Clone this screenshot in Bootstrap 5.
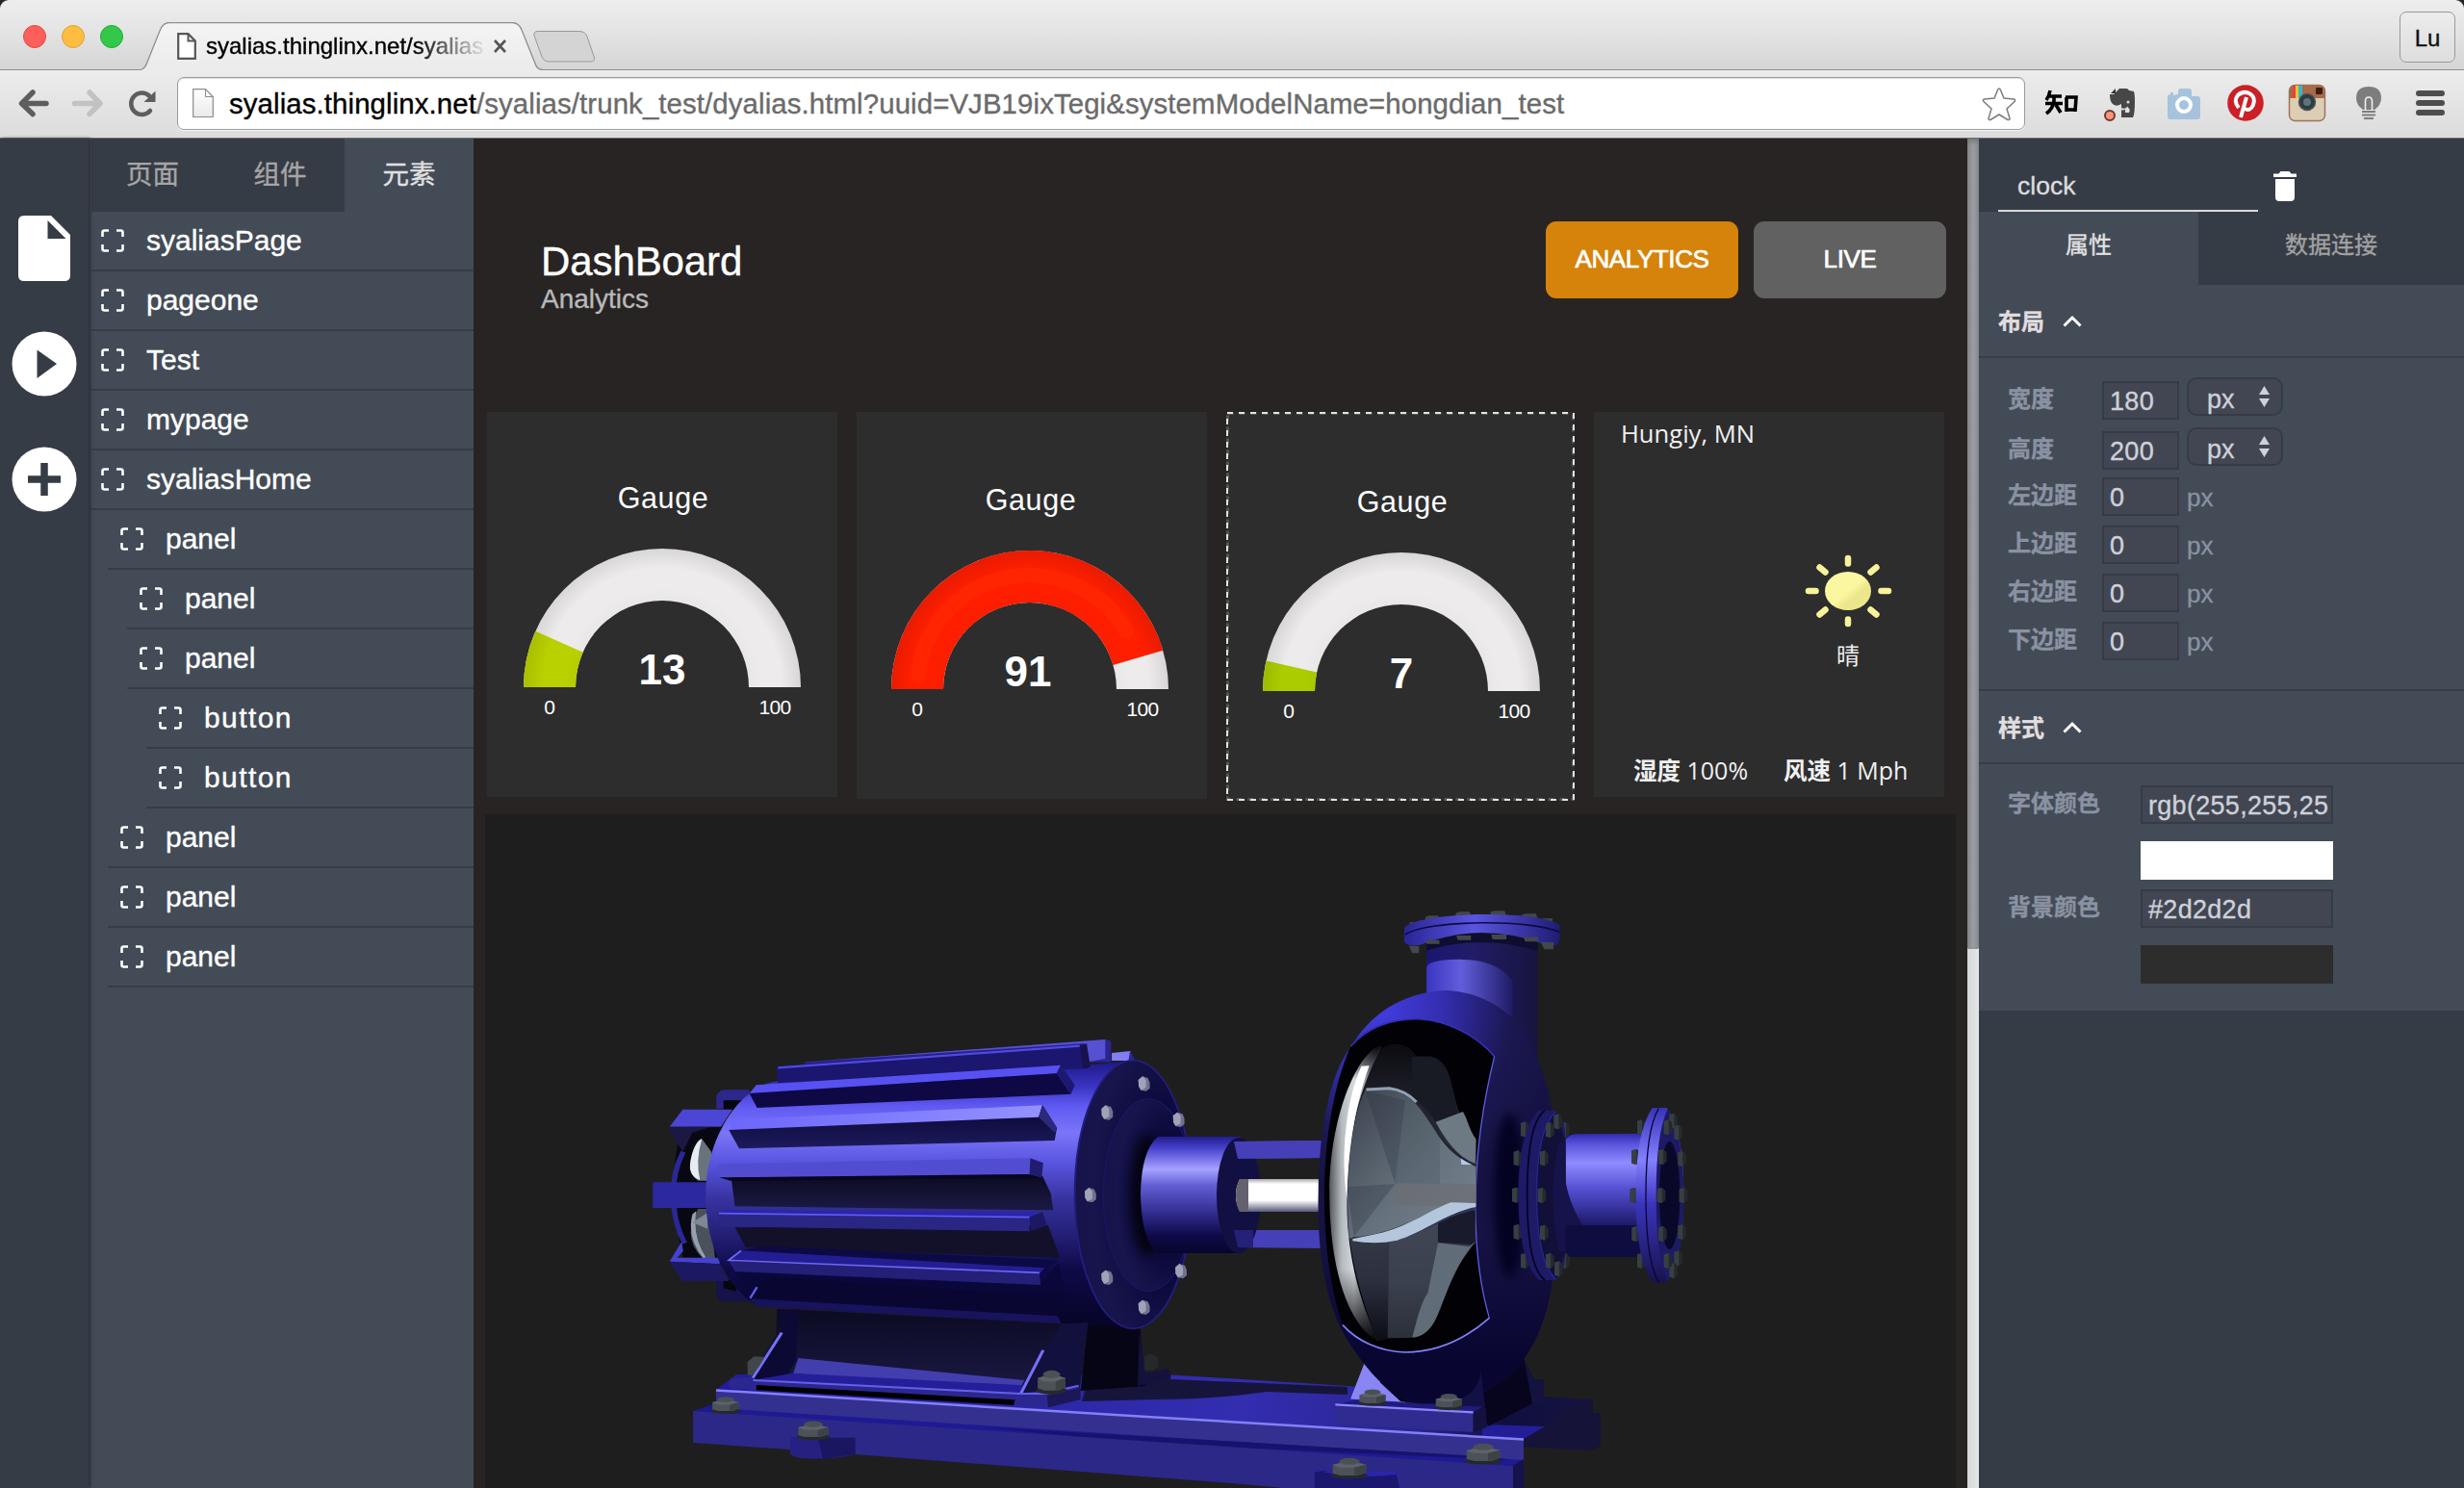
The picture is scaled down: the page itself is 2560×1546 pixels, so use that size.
<!DOCTYPE html>
<html lang="zh-CN">
<head>
<meta charset="utf-8">
<title>syalias.thinglinx.net</title>
<link href="https://cdn.jsdelivr.net/npm/bootstrap@5.3.0/dist/css/bootstrap.min.css" rel="stylesheet">
<style>
:root{--deep:#363c46;--slate:#434b57;--line:#353d46}
body{width:2560px;height:1546px;overflow:hidden;background:#282424;color:#fff;font-family:"Liberation Sans","Noto Sans CJK SC",sans-serif;line-height:1;-webkit-text-stroke:.35px}
svg{display:block;flex:none}
.tabstrip{height:73px;background:linear-gradient(#ededed,#e4e4e4 45%,#d5d5d5);border-bottom:1px solid #8f8f8f;border-radius:9px 9px 0 0}
.lights{gap:16px;padding:26px 0 0 24px;width:147px}
.lights i{width:24px;height:24px;border-radius:50%;border:1px solid}
.tabshape{width:416px;height:50px;margin-top:23px;position:relative}
.tabshape>svg{position:absolute;left:0;top:0}
.tabbody{position:relative;height:50px;padding-left:37px}
.tabtitle{width:290px;margin-left:10px;font-size:24px;color:#000;line-height:34px;-webkit-mask-image:linear-gradient(90deg,#000 75%,transparent 101%)}
.user-btn{width:58px;height:53px;margin:12px 9px 0 auto;border:1px solid #999;border-radius:7px;font-size:24px;color:#111;background:linear-gradient(#ececec,#dedede);padding-top:3px}
.toolbar{height:71px;background:linear-gradient(#ececec,#dcdcdc);border-bottom:1px solid #6e6e6e;padding:7px 20px 0 19px}
.urlbox{width:1920px;height:55px;margin-left:22px;background:#fff;border:1px solid #9b9b9b;border-radius:7px;padding:0 8px 0 15px;box-shadow:inset 0 1px 1px #ddd,0 1px 0 #f6f6f6}
.urltext{font-size:29.4px;letter-spacing:.1px;color:#6b6b6b;margin-left:16px;padding-top:1px}
.workspace{height:1402px}
.rail{width:92px;background:var(--deep);padding-top:80px;box-shadow:2px 0 3px #2a2e35;z-index:1}
.rail svg{margin:0 auto 52px}
.sidebar{width:400px;background:var(--slate);padding-left:3px}
.side-tabs{height:76px}
.side-tabs div{width:134px;background:var(--deep);color:#a6a6a6;font-size:27.5px;padding-bottom:0}
.side-tabs div:first-child{width:129px;padding-right:2px}
.side-tabs .on{background:var(--slate);color:#e0e0e0}
.node{height:62px;border-bottom:2px solid var(--line);padding-left:13px;font-size:30px;color:#fff;margin-left:calc(var(--d)*20px - 3px)}
.node.root{margin-left:0;padding-left:10px}
.node.wider{letter-spacing:1.4px}
.node svg{margin-right:23px}
.stage{width:1552px;background:#282424;padding:0 12px}
.stage-head{height:284px;padding:86px 10px 0 58px}
.stage-head h1{font-size:42px;line-height:42px;margin:21px 0 0;font-weight:400;letter-spacing:-.1px}
.stage-head p{font-size:28px;line-height:28px;color:#b9b9b9;margin:4px 0 0}
.pill{width:200px;height:80px;border-radius:11px;font-size:26px;letter-spacing:-.4px;padding-bottom:2px;-webkit-text-stroke:.7px #fff}
.cards{height:418px;padding:0 12px 0 2px;gap:20px}
.tile{width:364px;height:400px;background:#2d2d2d}
.tile.tall{height:402px}
.tile.chosen{width:362px;height:404px}
.weather{font-family:"Open Sans","Noto Sans CJK SC",sans-serif;color:#f0f0f0;font-size:25px}
.scene{width:1528px;height:700px;background:#1e1e1e}
.scroll{width:12px;background:linear-gradient(90deg,#d5d7d8,#e4e6e7)}
.scroll i{display:block;height:842px;background:linear-gradient(90deg,#8c8e92,#999ca2 50%,#909398);border-radius:0 0 2px 2px;box-shadow:inset 0 3px 5px #777}
.props{width:504px;background:var(--deep)}
.props-head{height:76px;padding:0 0 0 20px}
.name-field{width:270px;height:76px;border-bottom:2px solid #dadada;font-size:26.500px;color:#ddd;padding:32px 0 0 20px;line-height:34px}
.props-tabs{height:76px;font-size:24px}
.props-tabs div{padding-bottom:6px}
.sec{background:var(--slate)}
.sec-title{height:76px;border-bottom:2px solid var(--line);padding-left:20px;gap:19px;font-size:24px;font-weight:700;color:#e0dede}
.sec-title span{padding-top:3px}
.frow{padding-left:30px;height:40px;margin-bottom:10px}
.flabel{width:98px;font-size:24px;font-weight:700;color:#8a92a1;padding-bottom:2px}
.wide .flabel{width:138px}
.inbox{width:80px;height:40px;border:2px solid var(--deep);background:#424653;color:#cdd1d8;font-size:27px;padding:2px 0 0 6px;overflow:hidden;white-space:nowrap;letter-spacing:.3px}
.wide .inbox,.swatch{width:200px}
.swatch{height:40px;margin-left:168px}
.picker{width:100px;height:40px;border:2px solid var(--deep);border-radius:10px;background:#424653;color:#cdd1d8;font-size:27px;margin:-8px 0 0 8px;padding:8px 12px 0 19px}
.picker svg{margin-top:-1px}
.unit{font-size:26px;color:#8a92a1;margin-left:8px;padding-top:2px}
</style>
<script src="https://cdn.jsdelivr.net/npm/bootstrap@5.3.0/dist/js/bootstrap.bundle.min.js"></script>
</head>
<body>
<svg width="0" height="0" class="position-absolute">
 <defs>
  <symbol id="frame" viewBox="0 0 24 24"><path d="M1.500 8V3.500q0-2 2-2H8M16 1.500h4.500q2 0 2 2V8M22.500 16v4.500q0 2-2 2H16M8 22.500H3.500q-2 0-2-2V16" fill="none" stroke="#fff" stroke-width="2.600"/></symbol>
  <symbol id="caret" viewBox="0 0 20 13"><path d="M1.500 11.500L10 3l8.500 8.500" fill="none" stroke="#fff" stroke-width="3"/></symbol>
  <symbol id="updown" viewBox="0 0 11 22"><path d="M0 9L5.500 0 11 9zM0 13h11L5.500 22z" fill="#cdd1d8"/></symbol>
  <radialGradient id="ring" gradientUnits="userSpaceOnUse" cx="182" cy="286" r="144"><stop offset=".62" stop-color="#000" stop-opacity=".02"/><stop offset=".72" stop-color="#000" stop-opacity="0"/><stop offset=".86" stop-color="#000" stop-opacity="0"/><stop offset="1" stop-color="#000" stop-opacity=".09"/></radialGradient>
 </defs>
</svg>

<header>
 <div class="tabstrip d-flex">
  <div class="lights d-flex"><i style="background:#fd605b;border-color:#e2463f"></i><i style="background:#fdbd40;border-color:#dfa034"></i><i style="background:#34c84a;border-color:#1fa935"></i></div>
  <div class="tabshape">
   <svg width="480" height="50"><defs><linearGradient id="tg" x2="0" y2="1"><stop stop-color="#f4f4f4"/><stop offset="1" stop-color="#ebebeb"/></linearGradient></defs><path d="M-2 50.500V49.500Q3 49 5 44L19 9Q22 .500 29 .500H385Q392 .500 395 8L409 43Q411 49.500 417 49.500V50.500z" fill="url(#tg)"/><path d="M-2 49.500Q3 49 5 44L19 9Q22 .500 29 .500H385Q392 .500 395 8L409 43Q411 49.500 417 49.500" fill="none" stroke="#8f8f8f" stroke-width="1.300"/>
    <path d="M412 9.500H455Q461 9.500 463 15L470.500 37Q471 41 466 41H424Q418 41 416 36L408 14Q407 9.500 412 9.500z" fill="#d4d4d4" stroke="#999"/></svg>
   <div class="tabbody d-flex align-items-center">
    <svg width="20" height="28"><path d="M1.200 1.200H11.500L18.800 8.500V26.800H1.200z" fill="#fff" stroke="#565656" stroke-width="2.200"/><path d="M11.500 1V8.500H19" fill="none" stroke="#565656" stroke-width="2"/></svg>
    <div class="tabtitle overflow-hidden text-nowrap">syalias.thinglinx.net/syalias</div>
    <svg width="16" height="16" style="margin-left:7px"><path d="M3 2l11 12M14 2L3 14" stroke="#555" stroke-width="2.600"/></svg>
   </div>
  </div>
  <div class="user-btn d-flex justify-content-center align-items-center">Lu</div>
 </div>
 <div class="toolbar d-flex">
  <svg width="143" height="55" fill="none" stroke-linecap="round" stroke-linejoin="round">
   <path d="M15 16L3.500 27.500 15 38.500M5 27.500H29" stroke="#5e5e5e" stroke-width="5.500"/>
   <path d="M74 16L85 27.500 74 38.500M58.500 27.500H84" stroke="#c2c2c2" stroke-width="5.500"/>
   <path d="M137 35A11.200 11.200 0 1 1 136 19.500" stroke="#5e5e5e" stroke-width="4.500"/><path d="M142.500 14.500V26H130.500z" fill="#5e5e5e"/>
  </svg>
  <div class="urlbox d-flex align-items-center">
   <svg width="22" height="31"><defs><linearGradient id="pg" x2="0" y2="1"><stop stop-color="#fff"/><stop offset="1" stop-color="#eaeaea"/></linearGradient></defs><path d="M.700 .700H13.500L21.300 8.500V29.500H.700z" fill="url(#pg)" stroke="#8b8b8b" stroke-width="1.200"/><path d="M13.500 .700V8.500H21.300" fill="none" stroke="#8b8b8b"/></svg>
   <div class="urltext text-nowrap"><span class="text-black">syalias.thinglinx.net</span>/syalias/trunk_test/dyalias.html?uuid=VJB19ixTegi&amp;systemModelName=hongdian_test</div>
   <svg width="36" height="36" viewBox="0 0 36 36" class="ms-auto"><path d="M18 2q1 0 1.500 1.500L23 12l10.500 1q2 .800 .500 2.500L26 23l3 10q0 2-2 1.500L18 29l-9 5.500q-2 .500-2-1.500l3-10-8-7.500Q.500 13.800 2.500 13L13 12l3.500-8.500Q17 2 18 2z" fill="#fff" stroke="#7c7c7c" stroke-width="1.500"/></svg>
  </div>
  <svg width="436" height="56" viewBox="2104 80 436 56">
   <g fill="none" stroke="#000" stroke-width="3.600"><path d="M2130 94q-1 6-4 10M2129 100h13M2125 107.500h18M2134 100v5q-1 8-8 13M2136 109l5 8M2146 101h11l-1 15M2147 101v15M2146 114h10"/></g>
   <path d="M2196 98l6-6h7q2 0 3 2l5 1q1 3 1 10 0 14-2 17h-12v-8h4v3h4q2-4-2-6-2 3-6 1v-4q-6 4-10-1-2-3-2-9z" fill="#474747"/><path d="M2193 97l5-5v5z" fill="#333"/><circle cx="2211" cy="106" r="1.500" fill="#ddd"/><path d="M2203 113q3 3 8-2" stroke="#ccc" fill="none"/>
   <circle cx="2192" cy="120" r="5" fill="#ff9376" stroke="#6d3834" stroke-width="2"/>
   <path d="M2254 98q-2 0-2 3v20q0 3 3 3h28q3 0 3-3v-18q0-3-3-3h-6v-5q0-3-3-3h-8q-3 0-3 3v3l-5 1v-3h-3v3z" fill="#a6c3de"/><circle cx="2269" cy="109" r="7" fill="#a6c3de" stroke="#fff" stroke-width="4"/>
   <circle cx="2333" cy="107" r="18.800" fill="#cb2027"/><path d="M2326 112q-6-7-1-13 5-5 12-2 7 4 4 12-3 7-9 4M2334 101l-6 21" fill="none" stroke="#fff" stroke-width="4"/>
   <rect x="2378.500" y="88.500" width="37" height="37" rx="6" fill="#dccdb5" stroke="#9c7457" stroke-width="1.500"/><path d="M2379 102V94q0-5 5-5h26q5 0 5 5v8z" fill="#a9694a"/><path d="M2382 89h3v13h-3z" fill="#e8423a"/><path d="M2385 89h3v13h-3z" fill="#f5c23a"/><path d="M2388 89h4v13h-4z" fill="#38b7c9"/><rect x="2406" y="91" width="7" height="7" rx="1" fill="#3c1d14"/><circle cx="2397" cy="106" r="8.500" fill="#2d3c42" stroke="#555" stroke-width="1.500"/><circle cx="2397" cy="106" r="4" fill="#5f7478"/>
   <path d="M2455 114q-7-5-7-12 0-12 13-12t13 12q0 7-7 12z" fill="#7d7d7d"/><path d="M2457.500 115v-10q0-4 3.500-4t3.500 4v10" fill="none" stroke="#f0f0f0" stroke-width="1.600"/><path d="M2454 116h14M2454 119.500h14M2456 123h10" stroke="#7d7d7d" stroke-width="2"/>
   <path d="M2513 97h24M2513 107h24M2513 117h24" stroke="#4d4d4d" stroke-width="6" stroke-linecap="round"/>
  </svg>
 </div>
</header>

<main class="workspace d-flex">
 <nav class="rail position-relative">
  <svg width="54" height="68"><path d="M6 0H34L54 20V62q0 6-6 6H6q-6 0-6-6V6Q0 0 6 0z" fill="#fff"/><path d="M30.500 5V24H49.500z" fill="#363c46"/></svg>
  <svg width="68" height="68"><circle cx="34" cy="34" r="33.500" fill="#fff"/><path d="M26.500 19.500V49L47 34z" fill="#363c46"/></svg>
  <svg width="68" height="68"><circle cx="34" cy="34" r="33.500" fill="#fff"/><path d="M34 17V51M17 34H51" stroke="#363c46" stroke-width="7.500"/></svg>
 </nav>
 <aside class="sidebar">
  <div class="side-tabs d-flex" style="width:397px"><div class="d-flex align-items-center justify-content-center">页面</div><div class="d-flex align-items-center justify-content-center">组件</div><div class="on d-flex align-items-center justify-content-center">元素</div></div>
  <div class="node root d-flex align-items-center"><svg width="24" height="24"><use href="#frame"/></svg>syaliasPage</div>
  <div class="node root d-flex align-items-center"><svg width="24" height="24"><use href="#frame"/></svg>pageone</div>
  <div class="node root d-flex align-items-center"><svg width="24" height="24"><use href="#frame"/></svg>Test</div>
  <div class="node root d-flex align-items-center"><svg width="24" height="24"><use href="#frame"/></svg>mypage</div>
  <div class="node root d-flex align-items-center"><svg width="24" height="24"><use href="#frame"/></svg>syaliasHome</div>
  <div class="node d-flex align-items-center" style="--d:1"><svg width="24" height="24"><use href="#frame"/></svg>panel</div>
  <div class="node d-flex align-items-center" style="--d:2"><svg width="24" height="24"><use href="#frame"/></svg>panel</div>
  <div class="node d-flex align-items-center" style="--d:2"><svg width="24" height="24"><use href="#frame"/></svg>panel</div>
  <div class="node wider d-flex align-items-center" style="--d:3"><svg width="24" height="24"><use href="#frame"/></svg>button</div>
  <div class="node wider d-flex align-items-center" style="--d:3"><svg width="24" height="24"><use href="#frame"/></svg>button</div>
  <div class="node d-flex align-items-center" style="--d:1"><svg width="24" height="24"><use href="#frame"/></svg>panel</div>
  <div class="node d-flex align-items-center" style="--d:1"><svg width="24" height="24"><use href="#frame"/></svg>panel</div>
  <div class="node d-flex align-items-center" style="--d:1"><svg width="24" height="24"><use href="#frame"/></svg>panel</div>
 </aside>

 <section class="stage">
  <div class="stage-head d-flex justify-content-between">
   <div><h1>DashBoard</h1><p>Analytics</p></div>
   <div class="d-flex" style="gap:16px">
    <div class="pill d-flex align-items-center justify-content-center" style="background:#d5830a">ANALYTICS</div>
    <div class="pill d-flex align-items-center justify-content-center" style="background:#616161">LIVE</div>
   </div>
  </div>
  <div class="cards d-flex">
   <div class="tile"><svg width="364" height="400" fill="#fff" text-anchor="middle">
    <path d="M38 286A144 144 0 0 1 326 286H272A90 90 0 0 0 92 286z" fill="#edebeb"/>
    <path d="M38 286A144 144 0 0 1 50.300 227.800L99.700 249.800A90 90 0 0 0 92 286z" fill="#b9d100"/>
    <path d="M38 286A144 144 0 0 1 326 286H272A90 90 0 0 0 92 286z" fill="url(#ring)"/>
    <text x="183" y="100" font-size="30.500" letter-spacing=".6">Gauge</text><text x="182" y="283" font-size="44" font-weight="700">13</text>
    <text x="65" y="314" font-size="21">0</text><text x="299" y="314" font-size="21" letter-spacing="-.6">100</text></svg></div>
   <div class="tile tall"><svg width="364" height="402" fill="#fff" text-anchor="middle"><g transform="translate(-2 2)">
    <path d="M38 286A144 144 0 0 1 326 286H272A90 90 0 0 0 92 286z" fill="#edebeb"/>
    <path d="M38 286A144 144 0 0 1 320.300 245.800L268.400 260.900A90 90 0 0 0 92 286z" fill="#ff1e00"/>
    <path d="M66 272A116 116 0 0 1 282 226" fill="none" stroke="#ff2803" stroke-width="16" stroke-linecap="round" opacity=".7"/>
    <path d="M38 286A144 144 0 0 1 326 286H272A90 90 0 0 0 92 286z" fill="url(#ring)"/>
    <text x="183" y="100" font-size="30.500" letter-spacing=".6">Gauge</text><text x="180" y="283" font-size="44" font-weight="700">91</text>
    <text x="65" y="314" font-size="21">0</text><text x="299" y="314" font-size="21" letter-spacing="-.6">100</text></g></svg></div>
   <div class="tile chosen"><svg width="362" height="404" fill="#fff" text-anchor="middle"><rect x="1.500" y="1.500" width="359" height="401" fill="none" stroke="#555" stroke-width="3" stroke-dasharray="6 6"/><rect x="1" y="1" width="360" height="402" fill="none" stroke="#e2e2e2" stroke-width="2" stroke-dasharray="6 6"/><g transform="translate(0 4)">
    <path d="M38 286A144 144 0 0 1 326 286H272A90 90 0 0 0 92 286z" fill="#edebeb"/>
    <path d="M38 286A144 144 0 0 1 41.500 254.600L94.200 266.400A90 90 0 0 0 92 286z" fill="#abcd00"/>
    <path d="M38 286A144 144 0 0 1 326 286H272A90 90 0 0 0 92 286z" fill="url(#ring)"/>
    <text x="183" y="100" font-size="30.500" letter-spacing=".6">Gauge</text><text x="182" y="283" font-size="44" font-weight="700">7</text>
    <text x="65" y="314" font-size="21">0</text><text x="299" y="314" font-size="21" letter-spacing="-.6">100</text></g></svg></div>
   <div class="tile weather"><svg width="364" height="400" fill="#f0f0f0">
    <defs><linearGradient id="sun" x2="1" y2="1"><stop offset=".5" stop-color="#fbf7a0"/><stop offset=".65" stop-color="#ece78c"/></linearGradient></defs>
    <text x="28" y="32" font-size="25.600">Hungiy, MN</text>
    <g stroke="#f6f39a" stroke-width="6.500" stroke-linecap="round"><path d="M223 186h7.500M298.500 186H306M264 152v5.500M264 215.500v4.500M234.500 161.500l6 5M293.500 161.500l-6 5M234.500 210.500l6-5M293.500 210.500l-6-5"/></g>
    <ellipse cx="264" cy="186" rx="24" ry="20" fill="url(#sun)"/>
    <text x="252" y="262" font-size="24">晴</text>
    <text x="41" y="382" font-size="25"><tspan font-weight="700" font-size="24.500">湿度</tspan> 100%</text>
    <text x="197" y="382" font-size="25"><tspan font-weight="700" font-size="24.500">风速</tspan> 1 Mph</text></svg></div>
  </div>
  <div class="scene">
  <svg width="1528" height="700" viewBox="504 846 1528 700">
   <defs>
    <linearGradient id="body" x2="0" y2="1"><stop stop-color="#1c1784"/><stop offset=".1" stop-color="#3b35c4"/><stop offset=".17" stop-color="#5f59f2"/><stop offset=".27" stop-color="#7a75f8"/><stop offset=".38" stop-color="#5a55e0"/><stop offset=".52" stop-color="#37329e"/><stop offset=".66" stop-color="#221e72"/><stop offset=".78" stop-color="#0e0a48"/><stop offset="1" stop-color="#060424"/></linearGradient>
    <linearGradient id="cyl" x2="0" y2="1"><stop stop-color="#221c90"/><stop offset=".1" stop-color="#4742cc"/><stop offset=".28" stop-color="#a6a2ff"/><stop offset=".42" stop-color="#625dd4"/><stop offset=".65" stop-color="#322d90"/><stop offset=".85" stop-color="#0e0a48"/><stop offset="1" stop-color="#07052c"/></linearGradient>
    <linearGradient id="pipeR" x2="0" y2="1"><stop stop-color="#2e29ae"/><stop offset=".12" stop-color="#5a55dc"/><stop offset=".32" stop-color="#8f8bff"/><stop offset=".6" stop-color="#5550d4"/><stop offset="1" stop-color="#1c1868"/></linearGradient>
    <linearGradient id="f3" x2="1"><stop stop-color="#6c67fa"/><stop offset="1" stop-color="#9491ff"/></linearGradient>
    <linearGradient id="dk" x2="0" y2="1"><stop stop-color="#0a0634"/><stop offset="1" stop-color="#1d1b5c"/></linearGradient>
    <linearGradient id="dk2" x2="0" y2="1"><stop stop-color="#0c0b22"/><stop offset="1" stop-color="#1b1945"/></linearGradient>
    <radialGradient id="face" cx=".75" cy=".5" r=".75"><stop stop-color="#02010c"/><stop offset=".4" stop-color="#0b093a"/><stop offset=".8" stop-color="#17154c"/><stop offset="1" stop-color="#15134a"/></radialGradient>
    <radialGradient id="vol" gradientUnits="userSpaceOnUse" cx="220" cy="150" r="560"><stop stop-color="#423ce0"/><stop offset=".35" stop-color="#342eb0"/><stop offset=".72" stop-color="#1b1852"/><stop offset="1" stop-color="#161344"/></radialGradient>
    <linearGradient id="volb" x2="0" y2="1"><stop offset=".6" stop-color="#080530" stop-opacity="0"/><stop offset=".9" stop-color="#080530"/></linearGradient>
    <linearGradient id="neck" x2="1"><stop stop-color="#1a1670"/><stop offset=".4" stop-color="#211d68"/><stop offset="1" stop-color="#17143e"/></linearGradient>
    <linearGradient id="neckhi" x2="1"><stop stop-color="#3a35c0"/><stop offset=".4" stop-color="#625ddc"/><stop offset="1" stop-color="#1f1b64"/></linearGradient>
    <linearGradient id="fl" x2="1"><stop stop-color="#2a2594"/><stop offset=".45" stop-color="#5a55e0"/><stop offset="1" stop-color="#201c74"/></linearGradient>
    <linearGradient id="disc" gradientUnits="userSpaceOnUse" x1="64" y1="0" x2="215" y2="0"><stop stop-color="#56595f"/><stop offset=".25" stop-color="#b5babf"/><stop offset=".5" stop-color="#d5d9dc"/><stop offset="1" stop-color="#60646c"/></linearGradient>
    <linearGradient id="discfade" x2="0" y2="1"><stop stop-color="#020206"/><stop offset=".12" stop-color="#020206" stop-opacity="0"/><stop offset=".75" stop-color="#020206" stop-opacity="0"/><stop offset="1" stop-color="#020206"/></linearGradient>
    <linearGradient id="imp" x1="0" y1="0" x2="1" y2="1"><stop stop-color="#3a414d"/><stop offset=".55" stop-color="#65717c"/><stop offset="1" stop-color="#77848e"/></linearGradient>
    <linearGradient id="impb" x2="0" y2="1"><stop stop-color="#0c0c12"/><stop offset=".5" stop-color="#3c424e"/><stop offset=".8" stop-color="#2b2f3e"/><stop offset="1" stop-color="#0c0c14"/></linearGradient>
    <linearGradient id="shaft" x2="0" y2="1"><stop stop-color="#aaa"/><stop offset=".15" stop-color="#fff"/><stop offset=".65" stop-color="#fff"/><stop offset="1" stop-color="#555878"/></linearGradient>
    <linearGradient id="flr" x2="0" y2="1"><stop stop-color="#3833b8"/><stop offset=".3" stop-color="#8480ff"/><stop offset=".55" stop-color="#3a35bc"/><stop offset="1" stop-color="#17134c"/></linearGradient>
    <linearGradient id="basetop" x2="1"><stop stop-color="#221c9c"/><stop offset=".6" stop-color="#332db0"/><stop offset=".8" stop-color="#2a2492"/><stop offset=".9" stop-color="#100e40"/><stop offset="1" stop-color="#16143e"/></linearGradient>
    <filter id="soft" x="-30%" y="-30%" width="160%" height="160%"><feGaussianBlur stdDeviation="14"/></filter>
    <g id="nut"><ellipse cx="0" cy="0" rx="19" ry="3.500" fill="#25292c"/><path d="M-17-11L-8-13H8L17-11V-3L8 0H-9L-17-2z" fill="#4c5257"/><path d="M-17-11L-8-13H8L17-11 5-8H-10z" fill="#5d6368"/><path d="M5-8L17-11V-3L5 0z" fill="#3d4247"/><path d="M-11-14Q-9-18 0-18T11-14Q8-11 0-11T-11-14z" fill="#4a5055"/></g>
    <g id="screw"><path d="M-15-12L-4-23 10-18 15-4V14L5 23-8 20-14 8z" fill="#6f7290"/><path d="M-15-12L-4-23 5-12V12L-8 20-14 8z" fill="#a0a2b8"/></g>
    <g id="stud"><path d="M-12-20L4-24 14-14V14L4 24-12 20z" fill="#24292c"/><path d="M-12-20L3-24V24L-12 20z" fill="#383f42"/></g>
   </defs>

   <!-- base frame -->
   <g>
    <path d="M1655 1454V1468H1663V1502L1654 1507L1583 1503V1490z" fill="#151338"/>
    <path d="M744 1444L765 1428H1210L1400 1440L1655 1454L1583 1495z" fill="url(#basetop)"/>
    <path d="M1130 1433H1217L1400 1441V1449L1316 1446Q1260 1454 1200 1454L1124 1456z" fill="#16143a"/>
    <path d="M1540 1480L1605 1482L1583 1495L1540 1492z" fill="#231d98"/>
    <path d="M720 1466L744 1458L1583 1512V1517L1572 1523L1200 1500z" fill="#1f1993"/>
    <path d="M744 1444L1583 1495V1517L744 1463z" fill="#343090"/>
    <path d="M1020 1483L1200 1493L1540 1513L1572 1517L1200 1500z" fill="#17136c"/>
    <path d="M720 1466L1200 1498L1572 1523V1546H1333L1280 1541L888 1511L821 1506L720 1499z" fill="#2c2888"/>
    <path d="M1572 1523L1583 1516V1546H1572z" fill="#16124c"/>
    <path d="M744 1444.500L1200 1472.500L1583 1495.500" stroke="#8480f8" stroke-width="2.500" fill="none"/>
    <path d="M821 1493H888.500V1511Q870 1516 840 1515.500Q826 1515 821 1511z" fill="#262180"/><path d="M850 1494H888.500V1511L855 1515.500z" fill="#1a1660"/>
    <path d="M1366 1527L1400 1532 1451 1532 1454 1546H1366z" fill="#1b166e"/><path d="M1366 1527Q1405 1538 1451 1532V1529H1366z" fill="#2b25ac"/>
    <use href="#nut" transform="translate(754 1466) scale(.82)"/><use href="#nut" transform="translate(845 1493) scale(.92)"/><use href="#nut" transform="translate(1402 1533) scale(1.020)"/><use href="#nut" transform="translate(1541 1518) scale(1.020)"/>
   </g>

   <!-- motor -->
   <g transform="translate(660 1040) scale(.3954 .33333)">
    <path d="M1190 1000H1325L1340 1200L1170 1215z" fill="#060515"/><path d="M1325 1030L1340 1160L1400 1145Q1412 1160 1405 1180L1320 1200z" fill="#14123c"/>
    <path d="M1338 1150V1108L1350 1098 1374 1110V1140L1360 1152z" fill="#25292c"/>
    <path d="M213 335V300Q215 280 235 277H300V310H235V335z" fill="#2c278c"/><path d="M213 872V915Q215 935 235 935H310L260 860z" fill="#15124c"/><path d="M232 310H280V340H232zM232 870H265V905L232 895z" fill="#07060f"/>
    <path d="M120 390H230V820H130Q80 600 120 390z" fill="#080812"/>
    <path d="M145 500C150 460 165 430 175 430L200 470V560H165Q140 540 145 500z" fill="#6a737c"/><path d="M145 500Q155 440 175 430Q158 500 170 558Q138 545 145 500z" fill="#e6ecf2"/>
    <path d="M165 648H195L210 805H180Q120 740 165 648z" fill="#4a515c"/><path d="M150 665Q135 740 180 803L185 798Q150 735 160 655z" fill="#94a2b0"/><path d="M150 690L190 660V710z" fill="#7d8892"/>
    <path d="M126 470Q100 530 100 600Q100 690 130 755" fill="none" stroke="#2b2796" stroke-width="14"/>
    <path d="M125 338H255L225 392H90z" fill="#4b46d4"/><path d="M90 392H225L190 395 150 410 125 470L90 405z" fill="#1b1844"/>
    <path d="M46 565H190V645H46z" fill="#2c289e"/>
    <path d="M122 750L126 780 110 800H222V820L90 812z" fill="#4742cc"/><path d="M90 812L222 820L245 873H125z" fill="#1c1962"/>
    <path d="M375 250C280 260 185 420 185 605C185 780 250 900 320 950L1120 1005L1320 1021V185L1180 200z" fill="url(#body)"/>
    <path d="M447 190L1235 120L1250 124V190L440 212z" fill="#2a2590"/><path d="M447 190L1235 120V180L1190 190L1180 132z" fill="#5651d2"/><path d="M1252 162L1302 156L1298 186H1252z" fill="#827ef2"/><path d="M1300 156L1315 186H1296z" fill="#2c2790"/>
    <path d="M370 212L385 202L1175 135L1190 210L375 255z" fill="#1b166e"/><path d="M375 208L1168 140" stroke="#4f4ae0" stroke-width="7"/><path d="M1168 142L1186 132L1196 205L1178 212z" fill="#17124e"/>
    <path d="M318 262L1118 200L1107 226L300 288z" fill="#5751f2"/><path d="M300 288L1107 226L1145 290L320 333z" fill="#0e0944"/><path d="M1107 226L1118 200L1155 262L1145 290z" fill="#1d1970"/>
    <path d="M255 370L1070 325L1060 362L246 402z" fill="url(#f3)"/><path d="M246 402L1060 362L1070 325L1108 395L1102 435L273 460z" fill="url(#dk)"/><path d="M1060 362L1070 325L1108 395L1102 410z" fill="#2c287c"/>
    <path d="M252 550L1070 545L1092 600L1098 652L262 640z" fill="url(#dk2)"/><path d="M220 508L1038 490L1036 540L220 550z" fill="#524dd0"/><path d="M1038 490L1072 505L1068 552L1036 540z" fill="#211d6c"/><path d="M220 550L1036 540L1068 552L250 560z" fill="#08051e"/>
    <path d="M262 706L1085 700L1116 800L290 768z" fill="#121129"/><path d="M220 662L232 652L1070 660L1036 674z" fill="#2a24b2"/><path d="M220 662L1036 674V718L220 703z" fill="#2a2684"/><path d="M220 662L1036 674" stroke="#625df0" stroke-width="5"/><path d="M1036 674L1070 658L1082 700L1040 718z" fill="#1c1862"/>
    <path d="M278 778L340 764L1112 808L1065 848L246 808z" fill="#0d0944"/><path d="M246 805L278 778L1075 832L1065 848z" fill="#231d94"/><path d="M246 810L1062 848L1065 885L262 843z" fill="#242078"/><path d="M278 778L246 808L1062 847" stroke="#6d68f2" stroke-width="5" fill="none"/>
    <path d="M262 845L1065 887L1112 815L1130 925L350 870L300 900z" fill="#0a0738" opacity=".8"/>
    <path d="M320 890L350 860L1130 925L1110 985L300 928z" fill="#090632"/><path d="M300 928L1110 982L1120 1006L318 952z" fill="#17135c"/><path d="M302 926L320 892" stroke="#625dea" stroke-width="6"/>
    <ellipse cx="1308" cy="603" rx="153" ry="418" fill="url(#face)" stroke="#221e7c" stroke-width="5"/>
    <ellipse cx="1348" cy="605" rx="118" ry="300" fill="url(#face)" stroke="#191560" stroke-width="4"/>
    <ellipse cx="1345" cy="605" rx="45" ry="190" fill="#000" opacity=".7" filter="url(#soft)"/>
    <use href="#screw" x="1337" y="258"/><use href="#screw" x="1240" y="348"/><use href="#screw" x="1428" y="370"/><use href="#screw" x="1196" y="605"/><use href="#screw" x="1240" y="862"/><use href="#screw" x="1434" y="842"/><use href="#screw" x="1337" y="955"/>
    <!-- motor mount -->
    <path d="M372 960L430 962L1120 1006L1190 1002L1168 1205L1010 1228L300 1182L370 1040z" fill="url(#dk2)"/>
    <path d="M375 962H430L422 1120 400 1165 305 1182L385 1036z" fill="#0c0a34"/>
    <path d="M428 1113L1022 1182L1012 1205L415 1162z" fill="#433eae"/><path d="M415 1160L1018 1198L1012 1226L310 1182z" fill="#241f98"/>
    <path d="M1120 1006L1190 1002L1168 1205L1012 1228L1074 1088z" fill="#12103c"/>
    <path d="M385 1034L306 1180M1072 1088L1012 1226" stroke="#7571f6" stroke-width="8"/>
    <path d="M252 1176L305 1172L320 1182 1012 1224L1165 1197L1172 1242L1085 1267L250 1208Q240 1190 252 1176z" fill="#2c278e"/><path d="M310 1182L1012 1224H1080L1165 1199" stroke="#6560ea" stroke-width="6" fill="none"/><path d="M318 1197L998 1243L994 1260L318 1213z" fill="#000"/>
    <path d="M1082 1230L1170 1205V1242L1085 1267z" fill="#1b1758"/>
    <path d="M295 1165V1125L312 1108 340 1110 325 1140 306 1168z" fill="#41464b"/>
    <use href="#nut" transform="translate(1094 1214) scale(2.150 3.500)"/>
   </g>

   <!-- shaft and coupling -->
   <path d="M1282 1186L1374 1185V1203L1286 1204zM1280 1278H1374V1297L1284 1296z" fill="#4540b8"/><path d="M1280 1278H1302V1296H1284z" fill="#25217a"/>
   <path d="M1203 1181H1289V1302H1203Q1186 1290 1185 1240Q1186 1195 1203 1181z" fill="url(#cyl)"/>
   <ellipse cx="1287" cy="1242" rx="23" ry="60" fill="#121042"/><path d="M1282 1186L1374 1185V1203L1286 1204z" fill="#4540b8"/><path d="M1282 1278H1302V1296H1286z" fill="#25217a"/>
   <path d="M1288 1225H1374V1259H1288Q1280 1242 1288 1225z" fill="url(#shaft)"/><path d="M1288 1225H1297V1259H1288Q1280 1242 1288 1225z" fill="#63616f"/>

   <!-- pump feet -->
   <g transform="translate(1200 1400) scale(.33333)">
    <path d="M1150 35L1182 100H1212V172L1150 180z" fill="#14123e"/>
    <path d="M652 52L610 160L780 170L760 100z" fill="#8985f4"/>
    <path d="M700 108L1150 35L1176 175L1040 245L1000 195L765 168z" fill="#07051e"/>
   </g>

   <!-- discharge neck and flange -->
   <g transform="translate(1260 920) scale(.34435 .3992)">
    <path d="M645 140H980V460L900 480 645 300z" fill="url(#neck)"/>
    <path d="M645 212Q650 200 690 195Q850 180 905 250V340L645 300z" fill="url(#neckhi)"/>
    <g fill="#42484a"><path d="M595 95h30v14h-34zM642 82l10-4h28l5 14h-43zM733 72l12-4h30l6 14h-48zM838 69l12-3h30l6 13h-48zM933 76l12-3h30l5 13h-47zM995 86h30v12h-30z"/></g>
    <path d="M578 110C620 66 1000 64 1047 104V140Q1040 168 990 150Q810 96 640 150Q600 165 578 148z" fill="url(#fl)"/><path d="M580 128C650 88 970 88 1047 122" fill="none" stroke="#0e0a44" stroke-width="4"/>
    <path d="M645 150Q810 100 980 148V170Q810 125 645 170z" fill="#0f0d30"/>
    <g fill="#42484a"><path d="M592 158h30v18h-20zM642 142h42v10h-38zM735 130h44v12h-40zM840 128h46v12h-42zM938 134h44v12h-40zM990 148h38v18h-28z"/></g>
   </g>

   <!-- volute, impeller and suction pipe -->
   <g transform="translate(1360 1000) scale(.33333)">
    <path d="M29 720C32 500 70 340 130 265C190 160 290 95 420 87C540 90 620 150 670 215L713 300C755 400 782 560 776 720C776 950 750 1110 692 1200C640 1300 520 1378 370 1378C260 1370 190 1280 135 1200C50 1080 25 900 29 720z" fill="url(#vol)"/>
    <path d="M29 720C32 500 70 340 130 265C190 160 290 95 420 87C540 90 620 150 670 215L713 300C755 400 782 560 776 720C776 950 750 1110 692 1200C640 1300 520 1378 370 1378C260 1370 190 1280 135 1200C50 1080 25 900 29 720z" fill="url(#volb)"/>
    <ellipse cx="625" cy="725" rx="50" ry="255" fill="#04021c" opacity=".85" filter="url(#soft)"/>
    <path d="M105 1130C25 900 25 500 130 260C180 200 260 172 340 176C430 180 520 225 578 293C502 600 502 900 562 1108C480 1180 390 1215 300 1215C220 1213 150 1180 105 1130z" fill="#020206"/>
    <path d="M130 262C180 202 260 174 340 176C430 180 520 225 578 293" fill="none" stroke="#3530b8" stroke-width="5"/><path d="M578 293C502 600 502 900 562 1108" fill="none" stroke="#5f5ae4" stroke-width="4"/><path d="M562 1108C480 1180 390 1215 300 1215C220 1213 150 1180 105 1130" fill="none" stroke="#8480ff" stroke-width="5"/>
    <path d="M205 290C240 245 300 240 335 292H380C450 310 440 400 470 470C490 520 515 560 522 550L518 870C450 930 430 1000 410 1080C380 1160 340 1172 250 1172L215 1180C140 1000 110 820 120 700C125 500 160 400 205 290z" fill="url(#impb)"/>
    <path d="M320 294H380C450 310 440 400 465 470L395 497Q350 430 320 420z" fill="#181a24"/>
    <path d="M395 497L480 465L490 485Q505 530 520 550L518 630Q450 600 395 497z" fill="#6d7983"/>
    <path d="M175 398L250 390C330 405 370 480 410 545C440 590 480 620 520 635V750H440C350 790 250 850 140 855L125 860C115 700 125 500 175 398z" fill="url(#imp)"/>
    <path d="M175 398L268 690L300 430zM120 700L268 690 140 855z" fill="#2a3140" opacity=".3"/><path d="M300 430Q400 500 408 550V690H268z" fill="#505c66" opacity=".4"/>
    <path d="M472 602L518 630H475z" fill="#b3c7e6"/>
    <path d="M265 720Q265 687 280 687L520 690V758H280Q265 755 265 720z" fill="#6c6d73" opacity=".75"/>
    <path d="M180 395L250 392C330 405 360 470 395 520C430 580 470 610 520 632" fill="none" stroke="#232530" stroke-width="7"/><path d="M178 396L250 392Q300 398 335 435" fill="none" stroke="#91a1b4" stroke-width="9"/>
    <path d="M402 790L518 765V880L402 872z" fill="#191a2c"/>
    <path d="M250 872L402 800V872L370 1030L330 1170H245z" fill="#4a525e" opacity=".5"/>
    <path d="M402 874L500 885L522 868C450 950 435 1020 400 1100C380 1150 350 1168 322 1168C340 1100 350 1060 370 1030z" fill="#606c77"/>
    <path d="M136 862L200 848C300 830 380 770 442 748L520 750V762C430 780 350 845 275 866Q210 880 136 868z" fill="#b4c6dc"/><path d="M275 866C350 845 430 780 520 764V772C430 785 370 840 285 862z" fill="#34365c"/>
    <path d="M215 262C150 290 64 480 64 720C64 950 120 1130 215 1180C130 1000 112 820 120 700C125 500 160 400 225 262z" fill="url(#disc)"/><path d="M230 250C150 270 60 480 62 720C62 950 110 1140 220 1190C130 1000 112 820 120 700C125 500 160 400 230 250z" fill="url(#discfade)"/>
    <path d="M163 323L188 322C140 450 122 600 118 735C98 600 115 430 163 323z" fill="#fff"/>
    <path d="M765 535H1040V918H765z" fill="#16134a"/>
    <path d="M830 535L1040 533V820H855C800 740 785 640 798 555Q810 535 830 535z" fill="url(#pipeR)"/><path d="M780 820H1040V918H780z" fill="#0f0c40"/>
    <use href="#stud" x="672" y="520"/><use href="#stud" x="650" y="610"/><use href="#stud" x="645" y="725"/><use href="#stud" x="650" y="840"/><use href="#stud" x="672" y="930"/>
    <use href="#stud" x="798" y="522"/><use href="#stud" x="798" y="930"/>
    <path d="M715 462H765Q800 475 800 560L770 725 800 900Q795 985 765 990H715Q652 920 652 725T715 462z" fill="#1d1a66"/>
    <path d="M735 462Q680 500 680 725T735 990" fill="none" stroke="#05031e" stroke-width="5"/><path d="M770 464Q710 520 710 725T770 988" fill="none" stroke="#2a2690" stroke-width="4"/>
    <path d="M772 466Q712 520 712 725T772 986L800 900V560z" fill="#121038"/><path d="M780 560H800V900H780Q740 725 780 560z" fill="#16134a"/>
    <use href="#stud" x="775" y="496"/><use href="#stud" x="750" y="522"/><use href="#stud" x="732" y="610"/><use href="#stud" x="725" y="726"/><use href="#stud" x="732" y="842"/><use href="#stud" x="750" y="930"/><use href="#stud" x="777" y="955"/>
    <use href="#stud" x="1035" y="514"/><use href="#stud" x="1018" y="606"/><use href="#stud" x="1013" y="726"/><use href="#stud" x="1018" y="846"/><use href="#stud" x="1035" y="930"/>
    <path d="M1070 453H1115Q1168 520 1168 725T1115 998H1070Q1018 920 1018 725T1070 453z" fill="url(#flr)"/>
    <path d="M1090 455Q1050 520 1050 725T1090 997" fill="none" stroke="#0a0738" stroke-width="4"/>
    <path d="M1118 457Q1168 530 1168 725T1118 995Q1082 920 1082 725T1118 457z" fill="#1d1a66"/>
    <ellipse cx="1124" cy="726" rx="32" ry="168" fill="#0a0828"/>
    <use href="#stud" x="1135" y="494"/><use href="#stud" x="1150" y="530"/><use href="#stud" x="1162" y="612"/><use href="#stud" x="1166" y="726"/><use href="#stud" x="1162" y="840"/><use href="#stud" x="1150" y="922"/><use href="#stud" x="1135" y="960"/>
    <use href="#stud" x="1118" y="514"/><use href="#stud" x="1101" y="606"/><use href="#stud" x="1097" y="726"/><use href="#stud" x="1101" y="846"/><use href="#stud" x="1118" y="930"/>
   </g>

   <!-- front foot pad -->
   <g transform="translate(1200 1400) scale(.33333)">
    <path d="M765 168Q850 182 930 165T1015 70L1030 190L992 203z" fill="#131044"/>
    <path d="M652 52L610 160L765 168Q700 115 652 52z" fill="#8985f4"/>
    <path d="M562 178L620 165 1020 185L992 203z" fill="#1f1a80"/><path d="M562 178L992 202V264L562 240z" fill="#302b8e"/><path d="M992 202L1030 185L1036 248L992 264z" fill="#14113c"/><path d="M562 178L992 202" stroke="#8a86fa" stroke-width="7"/>
    <use href="#nut" transform="translate(678 174) scale(2.400)"/><use href="#nut" transform="translate(916 187) scale(2.400)"/>
   </g>
  </svg>
  </div>
 </section>
 <div class="scroll"><i></i></div>

 <aside class="props">
  <div class="props-head d-flex">
   <div class="name-field">clock</div>
   <svg width="24" height="31" style="margin:34px 0 0 16px"><path d="M7.500 0h9l2 2.500H24V6H0V2.500h5.500zM2 8H22V27q0 4-4 4H6q-4 0-4-4z" fill="#fff"/></svg>
  </div>
  <div class="props-tabs d-flex">
   <div class="sec d-flex align-items-center justify-content-center" style="width:228px;color:#e2e2e2">属性</div>
   <div class="d-flex align-items-center justify-content-center" style="width:276px;color:#a2a2a2">数据连接</div>
  </div>
  <div class="sec" style="height:754px">
   <div class="sec-title d-flex align-items-center"><span>布局</span><svg width="20" height="13"><use href="#caret"/></svg></div>
   <div style="height:344px;padding-top:24px">
    <div class="frow d-flex align-items-center" style="margin-bottom:12px"><div class="flabel">宽度</div><div class="inbox d-flex align-items-center">180</div><div class="picker d-flex justify-content-between">px<svg width="11" height="22"><use href="#updown"/></svg></div></div>
    <div class="frow d-flex align-items-center" style="margin-bottom:8px"><div class="flabel">高度</div><div class="inbox d-flex align-items-center">200</div><div class="picker d-flex justify-content-between">px<svg width="11" height="22"><use href="#updown"/></svg></div></div>
    <div class="frow d-flex align-items-center"><div class="flabel">左边距</div><div class="inbox d-flex align-items-center">0</div><div class="unit">px</div></div>
    <div class="frow d-flex align-items-center"><div class="flabel">上边距</div><div class="inbox d-flex align-items-center">0</div><div class="unit">px</div></div>
    <div class="frow d-flex align-items-center"><div class="flabel">右边距</div><div class="inbox d-flex align-items-center">0</div><div class="unit">px</div></div>
    <div class="frow d-flex align-items-center"><div class="flabel">下边距</div><div class="inbox d-flex align-items-center">0</div><div class="unit">px</div></div>
   </div>
   <div class="sec-title d-flex align-items-center" style="height:78px;border-top:2px solid var(--line)"><span>样式</span><svg width="20" height="13"><use href="#caret"/></svg></div>
   <div class="wide" style="padding-top:22px">
    <div class="frow d-flex align-items-center" style="margin-bottom:18px"><div class="flabel">字体颜色</div><div class="inbox d-flex align-items-center">rgb(255,255,25</div></div>
    <div class="swatch" style="background:#fff;margin-bottom:10px"></div>
    <div class="frow d-flex align-items-center" style="margin-bottom:18px"><div class="flabel">背景颜色</div><div class="inbox d-flex align-items-center">#2d2d2d</div></div>
    <div class="swatch" style="background:#2d2d2d"></div>
   </div>
  </div>
 </aside>
</main>
</body>
</html>
